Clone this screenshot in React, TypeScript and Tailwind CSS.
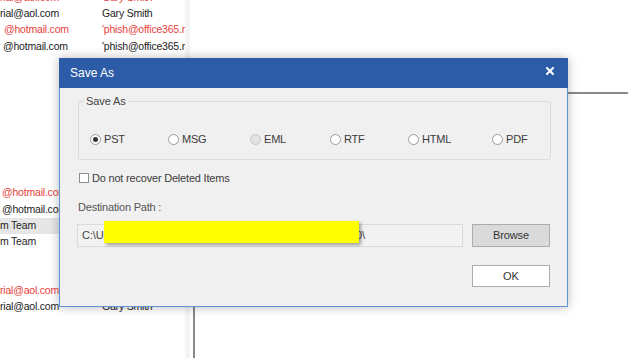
import React from 'react';

const font = "font-['Liberation_Sans',Arial,sans-serif]";

type Row = { a?: string; b?: string; red?: boolean; pa?: number; sel?: boolean };

const rows: Row[] = [
  { a: 'rial@aol.com', b: 'Gary Smith', red: true },
  { a: 'rial@aol.com', b: 'Gary Smith' },
  { a: '@hotmail.com', b: "'phish@office365.net", red: true, pa: 4 },
  { a: '@hotmail.com', b: "'phish@office365.net", pa: 3 },
  {}, {}, {}, {}, {}, {}, {}, {},
  { a: '@hotmail.com', b: "'phish@office365.net", red: true, pa: 2 },
  { a: '@hotmail.com', b: "'phish@office365.net", pa: 2 },
  { a: 'm Team', b: 'Microsoft Team', sel: true },
  { a: 'm Team', b: 'Microsoft Team' },
  {}, {},
  { a: 'rial@aol.com', b: 'Gary Smith', red: true },
  { a: 'rial@aol.com', b: 'Gary Smith' },
];

function Radio({ label, checked, disabled, w }: { label: string; checked?: boolean; disabled?: boolean; w: string }) {
  return (
    <div className={`flex items-center gap-[3px] ${w}`}>
      <span
        className={`flex h-[11px] w-[11px] items-center justify-center rounded-full border ${
          disabled ? 'border-[#c4c4c4] bg-[#e2e2e2]' : 'border-[#9a9a9a] bg-white'
        }`}
      >
        {checked && <span className="h-[5px] w-[5px] rounded-full bg-[#333]" />}
      </span>
      <span className="text-[11px] leading-[14px] tracking-[-0.2px] text-[#3c3c3c]">{label}</span>
    </div>
  );
}

function SaveAsDialog() {
  return (
    <div className="absolute left-[59px] top-[58px] flex h-[249px] w-[509px] flex-col border border-[#5f93d3] bg-[#f0f0f0] shadow-[0_0_10px_rgba(0,0,0,0.28)]">
      <div className="-mx-px -mt-px flex h-[30px] items-center justify-between bg-[#2c5ca8] pl-[11px] pr-[14px]">
        <span className="text-[12px] text-white">Save As</span>
        <svg width="8" height="8" viewBox="0 0 8 8" className="mb-[5px]">
          <path d="M1 1 L7 7 M7 1 L1 7" stroke="white" strokeWidth="2" strokeLinecap="square" />
        </svg>
      </div>

      <fieldset className="ml-[18px] mt-[6px] w-[473px] rounded-[3px] border border-[#dcdcdc] pb-[13px]">
        <legend className="ml-[5px] px-[2px] text-[11px] leading-[14px] tracking-[-0.1px] text-[#444]">Save As</legend>
        <div className="mt-[24px] flex items-center pl-[11px]">
          <Radio label="PST" checked w="w-[78px]" />
          <Radio label="MSG" w="w-[82px]" />
          <Radio label="EML" disabled w="w-[80px]" />
          <Radio label="RTF" w="w-[78px]" />
          <Radio label="HTML" w="w-[84px]" />
          <Radio label="PDF" w="w-[40px]" />
        </div>
      </fieldset>

      <div className="ml-[19px] mt-[11px] flex items-center gap-[3px]">
        <span className="h-[10px] w-[10px] border border-[#8f8f8f] bg-white" />
        <span className="text-[11px] leading-[14px] tracking-[-0.2px] text-[#3c3c3c]">Do not recover Deleted Items</span>
      </div>

      <div className="ml-[18px] mt-[15px] text-[11px] leading-[14px] tracking-[-0.2px] text-[#555]">Destination Path :</div>

      <div className="ml-[17px] mt-[10px] flex">
        <div className="flex h-[23px] w-[386px] items-center border border-[#dadada] bg-[#f2f2f2] pl-[4px] text-[11px] tracking-[-0.1px] text-[#444]">
          <span>C:\Us</span>
          <span className="relative z-10 -ml-[5px] -mr-[3px] h-[22px] w-[255px] -translate-y-[4px] bg-[#ffff00] shadow-[2px_2px_3px_rgba(0,0,0,0.35)]" />
          <span>0\</span>
        </div>
        <button className="ml-[9px] h-[23px] w-[78px] border border-[#adadad] bg-[#dadada] text-[11px] tracking-[-0.1px] text-[#333]">
          Browse
        </button>
      </div>

      <div className="mt-[18px] flex justify-end pr-[17px]">
        <button className="h-[22px] w-[78px] border border-[#adadad] bg-white text-[11px] text-[#333]">OK</button>
      </div>
    </div>
  );
}

export default function App() {
  return (
    <div className={`relative h-[358px] w-[628px] overflow-hidden bg-white ${font}`}>
      <div className="flex h-full">
        <div className="w-[185px] overflow-hidden">
          <div className="mt-[-10.5px] flex flex-col">
            {rows.map((r, i) => (
              <div
                key={i}
                className={`flex h-[16.3px] items-center text-[10.5px] tracking-[-0.2px] ${
                  r.red ? 'text-[#e8413c]' : 'text-[#222]'
                } ${r.sel ? 'bg-[#e6e6e6]' : ''}`}
              >
                <div className="w-[102px] shrink-0 overflow-hidden whitespace-nowrap" style={{ paddingLeft: r.pa ?? 0 }}>
                  {r.a}
                </div>
                <div className="w-[83px] shrink-0 overflow-hidden whitespace-nowrap">{r.b}</div>
              </div>
            ))}
          </div>
        </div>
        <div className="w-[5px] bg-[#f4f4f4]" />
        <div className="ml-[3px] mt-[92px] flex-1 border-l-2 border-t-2 border-[#8a8a8a]" />
      </div>
      <SaveAsDialog />
    </div>
  );
}
